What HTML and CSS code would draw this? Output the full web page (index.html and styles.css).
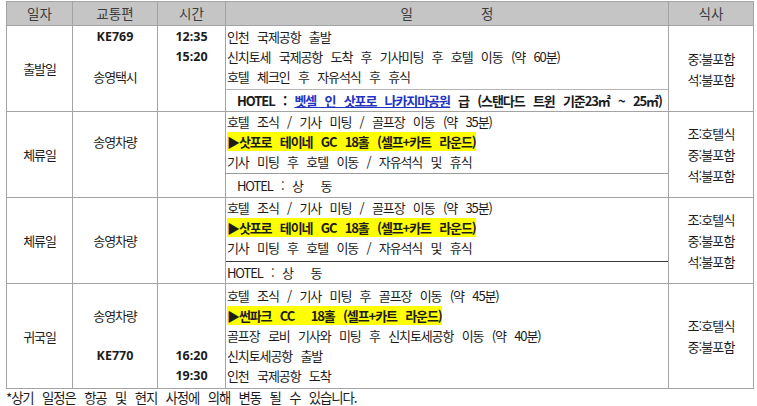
FILE: index.html
```html
<!DOCTYPE html>
<html lang="ko">
<head>
<meta charset="utf-8">
<link rel="stylesheet" href="styles.css">
</head>
<body>
<div class="page">
<table class="sched">
<colgroup>
<col class="w-day"><col class="w-trans"><col class="w-time"><col class="w-plan"><col class="w-meal">
</colgroup>
<thead>
<tr>
<th>일자</th><th>교통편</th><th>시간</th><th class="plan-h"><span>일</span><span>정</span></th><th>식사</th>
</tr>
</thead>
<tbody>
<tr class="day">
<td class="c-day">출발일</td>
<td class="c-top"><div class="p1"><div class="ln lat">KE769</div><div class="ln"></div><div class="ln">송영택시</div></div></td>
<td class="c-top"><div class="p1"><div class="ln lat">12:35</div><div class="ln lat">15:20</div></div></td>
<td class="c-plan">
<div class="p1">
<div class="ln">인천 국제공항 출발</div>
<div class="ln">신치토세 국제공항 도착 후 기사미팅 후 호텔 이동 (약 60분)</div>
<div class="ln">호텔 체크인 후 자유석식 후 휴식</div>
</div>
<div class="hotel h-light gap2 indent bold">HOTEL : <span class="link">벳셀 인 삿포로 나카지마공원</span> 급 (스탠다드 트윈 기준23㎡ ~ 25㎡)</div>
</td>
<td class="c-meal"><div class="ln">중:불포함</div><div class="ln">석:불포함</div></td>
</tr>
<tr class="day">
<td class="c-day">체류일</td>
<td class="c-top"><div class="ln"></div><div class="ln">송영차량</div></td>
<td class="c-top"></td>
<td class="c-plan">
<div>
<div class="ln">호텔 조식 / 기사 미팅 / 골프장 이동 (약 35분)</div>
<div class="ln"><span class="hl">▶삿포로 테이네 GC 18홀 (셀프+카트 라운드)</span></div>
<div class="ln">기사 미팅 후 호텔 이동 / 자유석식 및 휴식</div>
</div>
<div class="hotel h-mid gap1 tall indent">HOTEL : 상<span class="wide"> </span>동</div>
</td>
<td class="c-meal"><div class="ln">조:호텔식</div><div class="ln">중:불포함</div><div class="ln">석:불포함</div></td>
</tr>
<tr class="day">
<td class="c-day">체류일</td>
<td class="c-mid"><div class="ln">송영차량</div></td>
<td class="c-top"></td>
<td class="c-plan">
<div>
<div class="ln">호텔 조식 / 기사 미팅 / 골프장 이동 (약 35분)</div>
<div class="ln"><span class="hl">▶삿포로 테이네 GC 18홀 (셀프+카트 라운드)</span></div>
<div class="ln">기사 미팅 후 호텔 이동 / 자유석식 및 휴식</div>
</div>
<div class="hotel h-dark gap3">HOTEL : 상<span class="wide"> </span>동</div>
</td>
<td class="c-meal"><div class="ln">조:호텔식</div><div class="ln">중:불포함</div><div class="ln">석:불포함</div></td>
</tr>
<tr class="day">
<td class="c-day">귀국일</td>
<td class="c-top"><div class="p2"><div class="ln"></div><div class="ln">송영차량</div><div class="ln"></div><div class="ln lat">KE770</div></div></td>
<td class="c-top"><div class="p2"><div class="ln"></div><div class="ln"></div><div class="ln"></div><div class="ln lat">16:20</div><div class="ln lat">19:30</div></div></td>
<td class="c-plan">
<div class="p2 pb2">
<div class="ln">호텔 조식 / 기사 미팅 후 골프장 이동 (약 45분)</div>
<div class="ln"><span class="hl">▶썬파크 CC<span class="wide2"> </span>18홀 (셀프+카트 라운드)</span></div>
<div class="ln">골프장 로비 기사와 미팅 후 신치토세공항 이동 (약 40분)</div>
<div class="ln">신치토세공항 출발</div>
<div class="ln">인천 국제공항 도착</div>
</div>
</td>
<td class="c-meal"><div class="ln">조:호텔식</div><div class="ln">중:불포함</div></td>
</tr>
</tbody>
</table>
<p class="note">*상기 일정은 항공 및 현지 사정에 의해 변동 될 수 있습니다.</p>
</div>
</body>
</html>
```
FILE: styles.css
```css
html, body {
  margin: 0;
  padding: 0;
  background: #ffffff;
}
body {
  font-family: "Noto Sans CJK KR", "Noto Sans", sans-serif;
  font-size: 13px;
  color: #1c1c1c;
  letter-spacing: -1.1px;
  word-spacing: 5.8px;
}
.page {
  padding: 1px 4px 0 6px;
}
.sched {
  border-collapse: collapse;
  table-layout: fixed;
  width: 747px;
}
.w-day { width: 66px; }
.w-trans { width: 85px; }
.w-time { width: 68px; }
.w-plan { width: 443px; }
.w-meal { width: 85px; }
.sched th, .sched td {
  border: 1px solid #a3a3a3;
  padding: 0;
}
.sched th {
  background: #c5c5c5;
  color: #3d3d3d;
  font-weight: normal;
  font-size: 13.5px;
  letter-spacing: 0;
  word-spacing: 0;
  height: 23px;
  line-height: 23px;
  text-align: center;
}
.plan-h span {
  display: inline-block;
  margin: 0 34px;
}
.ln {
  height: 20px;
  line-height: 20px;
  white-space: nowrap;
}
.p1 { padding-top: 1px; }
.p2 { padding-top: 2px; }
.pb2 { padding-bottom: 2px; }
.lat {
  font-family: "Noto Sans", "Open Sans", sans-serif;
  font-size: 12.5px;
  font-weight: bold;
  letter-spacing: 0;
}
.c-day {
  text-align: center;
  vertical-align: middle;
}
.c-top {
  text-align: center;
  vertical-align: top;
}
.c-mid {
  text-align: center;
  vertical-align: middle;
}
.c-meal {
  text-align: center;
  vertical-align: middle;
  letter-spacing: -0.9px;
}
.c-meal .ln {
  height: 21px;
  line-height: 21px;
}
.c-plan {
  vertical-align: top;
  padding-left: 1px !important;
}
.hotel {
  height: 21px;
  line-height: 21px;
  white-space: nowrap;
  margin-left: -1px;
  padding-left: 1px;
}
.hotel.tall {
  height: 23px;
  line-height: 23px;
}
.gap1 { margin-top: 1px; }
.gap2 { margin-top: 2px; }
.gap3 { margin-top: 3px; }
.indent {
  padding-left: 11px;
}
.wide {
  word-spacing: 15px;
}
.wide2 {
  word-spacing: 14px;
}
.h-light { border-top: 1px solid #b4b4b4; }
.h-mid { border-top: 1px solid #9a9a9a; }
.h-dark { border-top: 1px solid #3a3a3a; }
.bold { font-weight: bold; }
.link {
  color: #2233c4;
  text-decoration: underline;
}
.hl {
  background: #ffff00;
  font-weight: bold;
}
.note {
  margin: 0;
  line-height: 16px;
  font-size: 13.4px;
}
```
